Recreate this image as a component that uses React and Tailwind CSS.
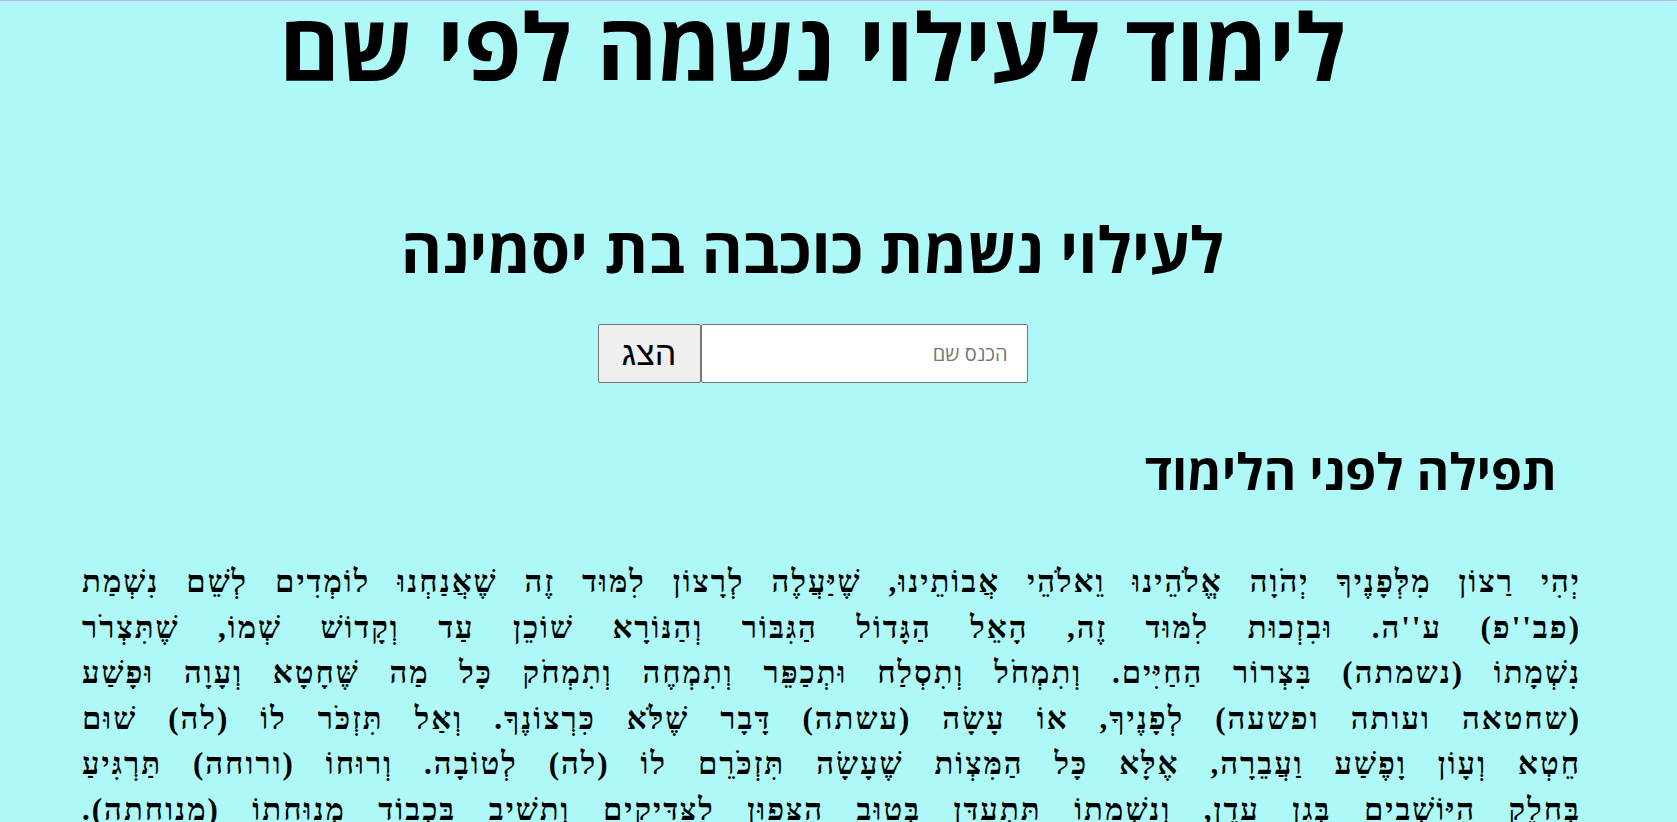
const prayerLines = [
  'יְהִי רַצוֹן מִלְּפָנֶיךָ יְהֹוָה אֱלֹהֵינוּ וֵאלֹהֵי אֲבוֹתֵינוּ, שֶׁיַּעֲלֶה לְרָצוֹן לִמּוּד זֶה שֶׁאֲנַחְנוּ לוֹמְדִים לְשֵׁם נִשְׁמַת',
  "(פב''פ) ע''ה. וּבִזְכוּת לִמּוּד זֶה, הָאֵל הַגָּדוֹל הַגִּבּוֹר וְהַנּוֹרָא שׁוֹכֵן עַד וְקָדוֹשׁ שְׁמוֹ, שֶׁתִּצְרֹר",
  'נִשְׁמָתוֹ (נשמתה) בִּצְרוֹר הַחַיִּים. וְתִמְחֹל וְתִסְלַח וּתְכַפֵּר וְתִמְחֶה וְתִמְחֹק כָּל מַה שֶּׁחָטָא וְעָוָה וּפָשַׁע',
  '(שחטאה ועותה ופשעה) לְפָנֶיךָ, אוֹ עָשָׂה (עשתה) דָּבָר שֶׁלֹּא כִּרְצוֹנֶךָ. וְאַל תִּזְכֹּר לוֹ (לה) שׁוּם',
  'חֵטְא וְעָוֹן וָפֶשַׁע וַעֲבֵרָה, אֶלָּא כָּל הַמִּצְוֹת שֶׁעָשָׂה תִּזְכֹּרֵם לוֹ (לה) לְטוֹבָה. וְרוּחוֹ (ורוחה) תַּרְגִּיעַ',
  'בְּחֵלֶק הַיּוֹשְׁבִים בְּגַן עֵדֶן, וְנִשְׁמָתוֹ תִּתְעַדֵּן בְּטוּב הַצָּפוּן לַצַּדִּיקִים וְתָשִׁיב בִּכְבוֹד מְנוּחָתוֹ (מנוחתה).',
  'וְיִהְיֶה לוֹ (לה) לְמֵלִיץ יֹשֶׁר לִפְנֵי כִּסֵּא כְּבוֹדֶךָ, וְיַעֲמֹד לְגוֹרָלוֹ (לגורלה) לְקֵץ הַיָּמִין. אָמֵן.',
];

export default function App() {
  return (
    <div
      dir="rtl"
      className="min-h-screen bg-[#aef9f7] border-t border-[#c4b4ec] text-black overflow-hidden"
    >
      <div className="pr-[52px]">
        {/* Titles */}
        <h1 className="text-center font-['Open_Sans','Liberation_Sans',sans-serif] font-bold text-[93px] leading-[88px]">
          לימוד לעילוי נשמה לפי שם
        </h1>

        <h2 className="mt-[124px] text-center font-['Open_Sans','Liberation_Sans',sans-serif] font-bold text-[63px] leading-[72px]">
          לעילוי נשמת כוכבה בת יסמינה
        </h2>

        {/* Name form */}
        <div className="mt-[39px] flex justify-center">
          <input
            type="text"
            placeholder="הכנס שם"
            className="w-[327px] h-[59px] bg-white border border-[#767676] rounded-[2px] px-[19px] text-[20px] font-['Open_Sans','Liberation_Sans',sans-serif] placeholder:text-[#757575] outline-none"
          />
          <button className="w-[103px] h-[59px] bg-[#efefef] border border-[#767676] rounded-[2px] text-[34px] font-['Liberation_Sans','Open_Sans',sans-serif]">
            הצג
          </button>
        </div>
      </div>

      {/* Prayer */}
      <div className="pr-[96px] pl-[82px]">
        <h3 className="mt-[58px] pr-[24px] font-['Open_Sans','Liberation_Sans',sans-serif] font-bold text-[50px] leading-[60px]">
          תפילה לפני הלימוד
        </h3>

        <div className="mt-[58px] font-['Liberation_Serif','DejaVu_Serif',serif] font-bold text-[31px] leading-[45.5px] tracking-[2px]">
          {prayerLines.map((line, i) => (
            <p key={i} className="text-justify [text-align-last:justify] whitespace-nowrap">
              {line}
            </p>
          ))}
        </div>
      </div>
    </div>
  );
}
